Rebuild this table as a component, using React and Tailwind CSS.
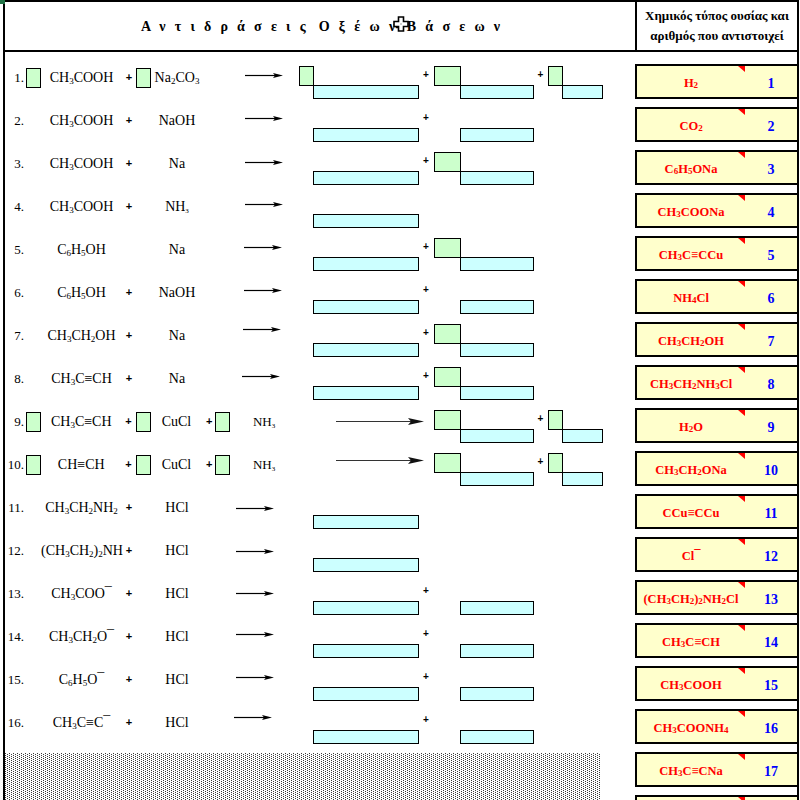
import React from "react";

const serif = "font-['Liberation_Serif','Times_New_Roman',serif]";
const sans = "font-['Liberation_Sans',Arial,sans-serif]";
const greenBox = "border border-black bg-[#ccffcc]";
const cyanBox = "border border-black bg-[#ccffff]";

function Sub({ children, tiny }) {
  return <sub className={tiny ? "text-[7px]" : "text-[9px]"}>{children}</sub>;
}

function Minus() {
  return <span className="relative -top-[1px]">¯</span>;
}

function Arrow({ className }) {
  return (
    <svg className={className} width="38" height="7" viewBox="0 0 38 7">
      <line x1="0" y1="3.5" x2="31" y2="3.5" stroke="#000" strokeWidth="1.2" />
      <polygon points="28,1 38,3.5 28,6 30,3.5" fill="#000" />
    </svg>
  );
}

function LongArrow({ className }) {
  return (
    <svg className={className} width="88" height="9" viewBox="0 0 88 9">
      <line x1="0" y1="4.5" x2="76" y2="4.5" stroke="#333" strokeWidth="1.2" />
      <polygon points="72,1 88,4.5 72,8 75,4.5" fill="#111" />
    </svg>
  );
}

const rows = [
  { n: "1.", g1: true, g2: true, pl: true, r1: <>CH<Sub>3</Sub>COOH</>, r2: <>Na<Sub>2</Sub>CO<Sub>3</Sub></>, ar: "ml-[41px] mt-[16px]", p: [2, 2, 2] },
  { n: "2.", pl: true, r1: <>CH<Sub>3</Sub>COOH</>, r2: "NaOH", ar: "ml-[41px] mt-[16px]", p: [1, 1, 0] },
  { n: "3.", pl: true, r1: <>CH<Sub>3</Sub>COOH</>, r2: "Na", ar: "ml-[41px] mt-[17px]", p: [1, 2, 0] },
  { n: "4.", pl: true, r1: <>CH<Sub>3</Sub>COOH</>, r2: <>NH<Sub tiny>3</Sub></>, ar: "ml-[41px] mt-[16px]", p: [1, 0, 0] },
  { n: "5.", r1: <>C<Sub>6</Sub>H<Sub>5</Sub>OH</>, r2: "Na", ar: "ml-[40px] mt-[16px]", p: [1, 2, 0] },
  { n: "6.", pl: true, r1: <>C<Sub>6</Sub>H<Sub>5</Sub>OH</>, r2: "NaOH", ar: "ml-[40px] mt-[16px]", p: [1, 1, 0] },
  { n: "7.", pl: true, r1: <>CH<Sub>3</Sub>CH<Sub>2</Sub>OH</>, r2: "Na", ar: "ml-[39px] mt-[12px]", p: [1, 2, 0] },
  { n: "8.", pl: true, r1: <>CH<Sub>3</Sub>C≡CH</>, r2: "Na", ar: "ml-[38px] mt-[16px]", p: [1, 2, 0] },
  { n: "9.", g1: true, g2: true, pl: true, r1: <>CH<Sub>3</Sub>C≡CH</>, r2: "CuCl", r3: true, la: "ml-[37px] mt-[17px]", p: [0, 2, 2] },
  { n: "10.", g1: true, g2: true, pl: true, r1: "CH≡CH", r2: "CuCl", r3: true, la: "ml-[37px] mt-[13px]", p: [0, 2, 2] },
  { n: "11.", pl: true, r1: <>CH<Sub>3</Sub>CH<Sub>2</Sub>NH<Sub>2</Sub></>, r2: "HCl", ar: "ml-[32px] mt-[19px]", p: [1, 0, 0] },
  { n: "12.", pl: true, r1: <>(CH<Sub>3</Sub>CH<Sub>2</Sub>)<Sub>2</Sub>NH</>, r2: "HCl", ar: "ml-[32px] mt-[19px]", p: [1, 0, 0] },
  { n: "13.", pl: true, r1: <>CH<Sub>3</Sub>COO<Minus /></>, r2: "HCl", ar: "ml-[32px] mt-[18px]", p: [1, 1, 0] },
  { n: "14.", pl: true, r1: <>CH<Sub>3</Sub>CH<Sub>2</Sub>O<Minus /></>, r2: "HCl", ar: "ml-[32px] mt-[16px]", p: [1, 1, 0] },
  { n: "15.", pl: true, r1: <>C<Sub>6</Sub>H<Sub>5</Sub>O<Minus /></>, r2: "HCl", ar: "ml-[32px] mt-[16px]", p: [1, 1, 0] },
  { n: "16.", pl: true, r1: <>CH<Sub>3</Sub>C≡C<Minus /></>, r2: "HCl", ar: "ml-[30px] mt-[13px]", p: [1, 1, 0] },
];

const cards = [
  <>H<Sub>2</Sub></>,
  <>CO<Sub>2</Sub></>,
  <>C<Sub>6</Sub>H<Sub>5</Sub>ONa</>,
  <>CH<Sub>3</Sub>COONa</>,
  <>CH<Sub>3</Sub>C≡CCu</>,
  <>NH<Sub>4</Sub>Cl</>,
  <>CH<Sub>3</Sub>CH<Sub>2</Sub>OH</>,
  <>CH<Sub>3</Sub>CH<Sub>2</Sub>NH<Sub>3</Sub>Cl</>,
  <>H<Sub>2</Sub>O</>,
  <>CH<Sub>3</Sub>CH<Sub>2</Sub>ONa</>,
  "CCu≡CCu",
  <>Cl<Minus /></>,
  <>(CH<Sub>3</Sub>CH<Sub>2</Sub>)<Sub>2</Sub>NH<Sub>2</Sub>Cl</>,
  <>CH<Sub>3</Sub>C≡CH</>,
  <>CH<Sub>3</Sub>COOH</>,
  <>CH<Sub>3</Sub>COONH<Sub>4</Sub></>,
  <>CH<Sub>3</Sub>C≡CNa</>,
];

function Card({ i }) {
  return (
    <div className="w-[162px] pt-[8px]">
      <div className="flex h-[35px] border-2 border-r-0 border-black bg-[#ffffcc]">
        <div className="relative flex w-[108px] items-center justify-center whitespace-nowrap pt-[3px] text-[12.5px] font-bold text-[#ff0000]">
          {cards[i]}
          <svg className="absolute right-0 top-0" width="7" height="6" viewBox="0 0 7 6">
            <polygon points="0,0 7,0 7,6" fill="#ff0000" />
          </svg>
        </div>
        <div className="flex flex-1 items-center justify-center pt-[3px] text-[14px] font-bold text-[#0000ff]">
          {cards[i] ? i + 1 : ""}
        </div>
      </div>
    </div>
  );
}

function Product({ kind, slot }) {
  const w = ["w-[119px]", "w-[99px]", "w-[55px]"][slot];
  const gw = ["w-[15px]", "w-[27px]", "w-[15px]"][slot];
  const cw = ["ml-[14px] w-[106px]", "ml-[26px] w-[74px]", "ml-[14px] w-[41px]"][slot];
  return (
    <div className={`${w} pt-[10px]`}>
      <div className={`h-[20px] ${gw} ${kind === 2 ? greenBox : ""}`} />
      {kind > 0 && <div className={`-mt-px h-[14px] ${cw} ${cyanBox}`} />}
    </div>
  );
}

function PPlus({ show, w }) {
  return (
    <div className={`${w} pt-[13px] text-center text-[10px] font-bold leading-[12px] ${sans}`}>
      {show ? "+" : ""}
    </div>
  );
}

function Row({ r, i }) {
  return (
    <div className="flex h-[43px]">
      <div className="flex w-[630px]">
        <div className="flex w-[294px] items-center text-[14px]">
          <div className="w-[21px] pr-[2px] text-right text-[13px]">{r.n}</div>
          <div className="w-[15px]">{r.g1 && <div className={`h-[20px] w-[15px] ${greenBox}`} />}</div>
          <div className="w-[81px] whitespace-nowrap text-center">{r.r1}</div>
          <div className={`w-[14px] text-center text-[11px] font-bold ${sans}`}>{r.pl ? "+" : ""}</div>
          <div className="w-[14px]">{r.g2 && <div className={`h-[20px] w-[15px] ${greenBox}`} />}</div>
          <div className="w-[54px] whitespace-nowrap text-center">{r.r2}</div>
          {r.r3 ? (
            <>
              <div className={`w-[12px] text-center text-[11px] font-bold ${sans}`}>+</div>
              <div className="w-[14px]"><div className={`h-[20px] w-[15px] ${greenBox}`} /></div>
              <div className="w-[70px] whitespace-nowrap text-center text-[13px]">
                NH<Sub tiny>3</Sub>
              </div>
            </>
          ) : (
            <div className="h-full flex-1">
              <Arrow className={r.ar} />
            </div>
          )}
        </div>
        {r.la ? (
          <div className="w-[119px]">
            <LongArrow className={r.la} />
          </div>
        ) : (
          <Product kind={r.p[0]} slot={0} />
        )}
        <PPlus show={r.p[0] > 0 && r.p[1] > 0} w="w-[16px]" />
        <Product kind={r.p[1]} slot={1} />
        <PPlus show={r.p[2] > 0} w="w-[15px]" />
        <Product kind={r.p[2]} slot={2} />
      </div>
      <Card i={i} />
    </div>
  );
}

export default function App() {
  return (
    <div className={`relative h-[800px] w-[800px] overflow-hidden bg-white text-black ${serif}`}>
      <div className="ml-[3px] w-[796px] border-x-2 border-t-2 border-black">
        {/* Header */}
        <div className="flex h-[50px] border-b-2 border-black">
          <div className="flex w-[630px] items-center pl-[136px] text-[14px] font-bold tracking-[9.2px]">
            <span className="whitespace-nowrap">
              Αντιδράσεις<span className="inline-block w-[4px]" />Οξέω<span className="tracking-normal">ν-</span>
              <span className="inline-block w-[7px]" />Βάσεων
            </span>
          </div>
          <div className="flex w-[162px] flex-col items-center justify-center border-l-2 border-black text-[13px] font-bold leading-[20px]">
            <span className="whitespace-nowrap">Χημικός τύπος ουσίας και</span>
            <span className="whitespace-nowrap">αριθμός που αντιστοιχεί</span>
          </div>
        </div>

        <div className="pt-[4px]">
          {rows.map((r, i) => (
            <Row key={r.n} r={r} i={i} />
          ))}
          <div className="flex h-[43px]">
            <div className="w-[630px] pt-[9px]">
              <div className="h-[60px] w-[596px] bg-[image:conic-gradient(at_1px_1px,transparent_75%,#3a3a3a_0),conic-gradient(at_1px_1px,transparent_75%,#3a3a3a_0)] bg-[length:4px_2px] bg-[position:0_0,2px_1px]" />
            </div>
            <Card i={16} />
          </div>
          <div className="flex h-[43px]">
            <div className="w-[630px]" />
            <Card i={17} />
          </div>
        </div>
      </div>

      {/* Excel selection handle and cursor */}
      <div className="absolute left-0 top-0 h-[4px] w-[5px] bg-[#217346]" />
      <svg className="absolute left-[393px] top-[16px]" width="16" height="16" viewBox="0 0 16 16">
        <path d="M5.5 1H10.5V5.5H15V10.5H10.5V15H5.5V10.5H1V5.5H5.5Z" fill="#fff" stroke="#000" strokeWidth="1.6" />
        <rect x="7" y="7" width="2" height="2" fill="#cfcfcf" />
      </svg>
    </div>
  );
}
